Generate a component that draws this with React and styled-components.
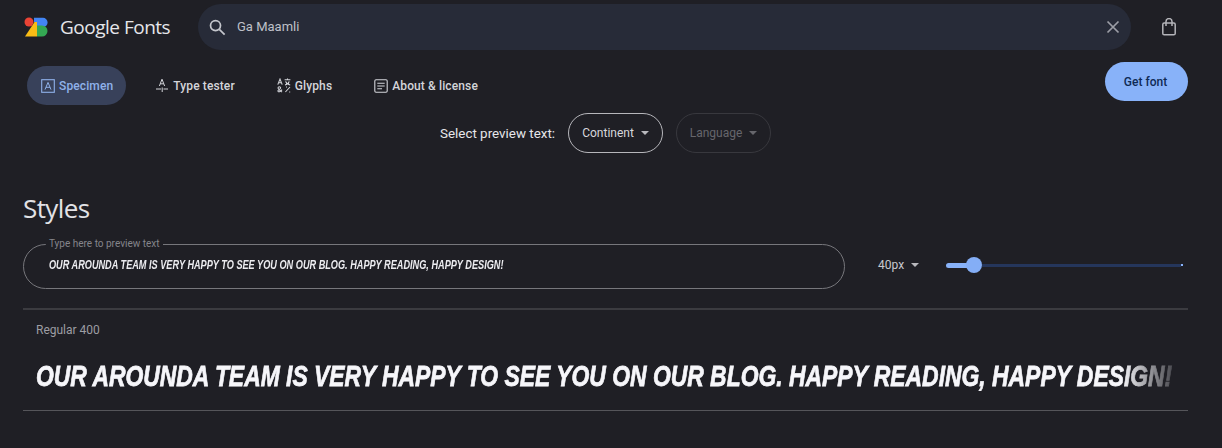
import React from "react";
import styled, { createGlobalStyle } from "styled-components";

const SAMPLE = "OUR AROUNDA TEAM IS VERY HAPPY TO SEE YOU ON OUR BLOG. HAPPY READING, HAPPY DESIGN!";

const Global = createGlobalStyle`
  html, body { margin: 0; padding: 0; background: #1f1f25; }
  body { font-family: "Roboto", "Liberation Sans", sans-serif; color: #e4e4e8; overflow: hidden; }
  * { box-sizing: border-box; }
`;

const Page = styled.div`
  width: 1222px;
  height: 448px;
  background: #1f1f25;
  display: flex;
  flex-direction: column;
`;

const Header = styled.header`
  display: flex;
  align-items: center;
  height: 54px;
  padding: 4px 0 4px 24px;
`;

const Brand = styled.div`
  display: flex;
  align-items: center;
  gap: 10px;
  width: 174px;
  margin-top: -1px;
`;

const BrandName = styled.span`
  font-family: "Open Sans", "Liberation Sans", sans-serif;
  font-size: 19px;
  letter-spacing: -0.5px;
  color: #e6e6ea;
  white-space: nowrap;
`;

const Search = styled.div`
  width: 933px;
  height: 46px;
  border-radius: 23px;
  background: #272b38;
  display: flex;
  align-items: center;
  padding: 0 6px 0 7px;
  color: #c4c6cc;
`;

const SearchText = styled.span`
  flex: 1;
  font-size: 13px;
  margin-left: 8px;
  margin-top: -1px;
  color: #bfc1c8;
`;

const IconSlot = styled.span`
  display: flex;
  align-items: center;
  justify-content: center;
  width: 24px;
  height: 24px;
  color: ${(p) => p.$color || "#c4c6cc"};
`;

const BagSlot = styled(IconSlot)`
  margin-left: 26px;
`;

const TabRow = styled.div`
  display: flex;
  align-items: flex-start;
  justify-content: space-between;
  height: 59px;
  padding: 8px 34px 0 27px;
`;

const Tabs = styled.nav`
  display: flex;
  gap: 15px;
  padding-top: 4px;
`;

const Tab = styled.div`
  display: flex;
  align-items: center;
  gap: 4px;
  height: 39px;
  padding: 0 13px 0 14px;
  border-radius: 20px;
  font-size: 12px;
  font-weight: 500;
  letter-spacing: 0.12px;
  white-space: nowrap;
  background: ${(p) => (p.$active ? "#38415a" : "transparent")};
  color: ${(p) => (p.$active ? "#8fb1ea" : "#d4d5da")};
`;

const GetFont = styled.button`
  width: 83px;
  height: 39px;
  margin-top: 0;
  padding: 0 2px 0 0;
  border: 0;
  border-radius: 20px;
  background: #88b2f9;
  color: #0f2a55;
  font: 500 12px "Roboto", sans-serif;
`;

const PreviewRow = styled.div`
  display: flex;
  align-items: center;
  height: 40px;
  padding-left: 440px;
  gap: 13px;
`;

const PreviewLabel = styled.span`
  font-size: 13.4px;
  color: #e6e6ea;
`;

const Chips = styled.div`
  display: flex;
  gap: 13px;
`;

const Chip = styled.div`
  display: flex;
  align-items: center;
  justify-content: center;
  gap: 7px;
  width: ${(p) => p.$width}px;
  height: 40px;
  border-radius: 20px;
  font-size: 12px;
  border: 1px solid ${(p) => (p.$disabled ? "#38383e" : "#b6b6bb")};
  color: ${(p) => (p.$disabled ? "#66666c" : "#d8d8dc")};
`;

const Caret = styled.span`
  width: 0;
  height: 0;
  border-left: 4.5px solid transparent;
  border-right: 4.5px solid transparent;
  border-top: 4.5px solid ${(p) => p.$color || "#b8b8bd"};
`;

const Section = styled.section`
  padding: 0 34px 0 23px;
`;

const Title = styled.h2`
  margin: 38px 0 0;
  height: 35px;
  font: 400 26px/35px "Open Sans", "Roboto", sans-serif;
  letter-spacing: -0.6px;
  color: #e2e2e6;
`;

const Controls = styled.div`
  display: flex;
  align-items: center;
  height: 72px;
  margin-top: 12px;
  border-bottom: 2px solid #3b3b40;
  padding-bottom: 16px;
`;

const Field = styled.fieldset`
  align-self: flex-start;
  flex: none;
  width: 822px;
  height: 51px;
  margin: 0;
  padding: 0 0 0 25px;
  border: 1px solid #77777c;
  border-radius: 23px;
  display: block;
`;

const FieldLegend = styled.legend`
  font-size: 10px;
  line-height: 12px;
  padding: 0 3px;
  margin-left: -3px;
  color: #85858b;
`;

const FieldText = styled.div`
  font-family: "Liberation Sans", sans-serif;
  font-weight: 700;
  font-style: italic;
  font-size: 9.17px;
  line-height: 14px;
  margin-top: 8px;
  color: #ececf0;
  white-space: nowrap;
  transform: scaleY(1.3);
`;

const SizeSelect = styled.div`
  display: flex;
  align-items: center;
  gap: 7px;
  margin-left: 33px;
  font-size: 12px;
  color: #c9c9ce;
`;

const Slider = styled.div`
  display: flex;
  align-items: center;
  width: 237px;
  margin-left: 27px;
  height: 16px;
`;

const SliderFill = styled.div`
  width: 21px;
  height: 5px;
  border-radius: 3px 0 0 3px;
  background: #88b2f9;
`;

const SliderKnob = styled.div`
  width: 16px;
  height: 16px;
  border-radius: 50%;
  background: #84aef6;
  margin-left: -1px;
`;

const SliderRest = styled.div`
  flex: 1;
  height: 3px;
  background: #25365c;
  margin-right: 3px;
`;

const SliderDot = styled.div`
  width: 2px;
  height: 2px;
  background: #88b2f9;
  margin-left: -3px;
`;

const StyleRow = styled.div`
  height: 101px;
  padding: 12px 0 0 13px;
  border-bottom: 1px solid #55555a;
`;

const StyleName = styled.div`
  font-size: 12px;
  line-height: 16px;
  color: #9d9da3;
`;

const BigSample = styled.div`
  margin-top: 20px;
  width: 1137px;
  font-family: "Liberation Sans", sans-serif;
  font-weight: 700;
  font-style: italic;
  font-size: 22.9px;
  line-height: 36px;
  white-space: nowrap;
  color: #f6f6fa;
  -webkit-text-stroke: 0.6px #f6f6fa;
  transform: scaleY(1.3);
  -webkit-mask-image: linear-gradient(to right, #000 95.5%, rgba(0,0,0,0.2) 100%);
  mask-image: linear-gradient(to right, #000 95.5%, rgba(0,0,0,0.2) 100%);
`;

const Logo = () => (
  <svg width="26" height="20" viewBox="0 0 26 20">
    <path d="M1 19.5 L10.5 5 L13 5 V19.5 Z" fill="#f9bc15" />
    <circle cx="5" cy="5" r="4.5" fill="#ea4335" />
    <path d="M10 0.8 H19 A4.6 4.6 0 0 1 19 10 H13 V5 H10 Z" fill="#4285f4" />
    <path d="M13 8.5 H18 A5.5 5.5 0 1 1 18 19.5 H13 Z" fill="#34a853" />
  </svg>
);

const SearchIcon = () => (
  <svg width="19" height="19" viewBox="0 0 24 24" fill="none" stroke="currentColor" strokeWidth="2.2">
    <circle cx="9.5" cy="9.5" r="6.3" />
    <path d="M14.3 14.3 L21 21" />
  </svg>
);

const CloseIcon = () => (
  <svg width="14" height="14" viewBox="0 0 14 14" fill="none" stroke="currentColor" strokeWidth="1.7">
    <path d="M1.5 1.5 L12.5 12.5 M12.5 1.5 L1.5 12.5" />
  </svg>
);

const BagIcon = () => (
  <svg width="16" height="18" viewBox="0 0 16 18" fill="none" stroke="currentColor" strokeWidth="1.5">
    <rect x="1.8" y="5" width="12.4" height="11.8" rx="1.4" />
    <path d="M5 8 V3.6 A3 3 0 0 1 11 3.6 V8" />
  </svg>
);

const SpecimenIcon = () => (
  <svg width="14" height="14" viewBox="0 0 14 14" fill="none" stroke="currentColor">
    <rect x="0.7" y="0.7" width="12.6" height="12.6" strokeWidth="1.1" />
    <path d="M4 10.6 L7 3.4 L10 10.6 M5 8.3 H9" strokeWidth="1" />
  </svg>
);

const TesterIcon = () => (
  <svg width="14" height="15" viewBox="0 0 14 15" fill="none" stroke="currentColor">
    <path d="M4.4 8 L7 1.2 L9.6 8 M5.4 5.8 H8.6" strokeWidth="1" />
    <path d="M1 11 H6 M8.5 11 H13 M7.2 9.5 V14" strokeWidth="1" />
  </svg>
);

const GlyphsIcon = () => (
  <svg width="14" height="15" viewBox="0 0 14 15" fill="none" stroke="currentColor" strokeWidth="1.05">
    <path d="M0.8 6.6 L3 1 L5.2 6.6 M1.6 4.8 H4.4" />
    <path d="M7.6 1.8 H13.4 M10.5 0.6 V1.8 M8.6 3.4 C9.4 5.6 11 6.6 13.2 7 M12.2 3.4 C11.6 5.4 10.2 6.5 8 7" />
    <path d="M5 14 C2.5 12 1 11.2 1 10 C1 8.4 3.8 8.4 3.6 10 C3.4 11.3 0.6 11.8 0.9 13 C1.2 14.4 3.5 14 5 11.6" />
    <path d="M8.4 14 L13 9 M9 9 h1 M12.2 14 h1" />
  </svg>
);

const AboutIcon = () => (
  <svg width="14" height="14" viewBox="0 0 14 14" fill="none" stroke="currentColor" strokeWidth="1.1">
    <rect x="0.8" y="0.8" width="12.4" height="12.4" rx="1.2" />
    <path d="M3.3 4.3 H10.7 M3.3 7 H10.7 M3.3 9.7 H8" />
  </svg>
);

export default function App() {
  return (
    <Page>
      <Global />
      <Header>
        <Brand>
          <Logo />
          <BrandName>Google Fonts</BrandName>
        </Brand>
        <Search>
          <IconSlot><SearchIcon /></IconSlot>
          <SearchText>Ga Maamli</SearchText>
          <IconSlot $color="#9c9ea6"><CloseIcon /></IconSlot>
        </Search>
        <BagSlot $color="#b4b4b9"><BagIcon /></BagSlot>
      </Header>
      <TabRow>
        <Tabs>
          <Tab $active><SpecimenIcon />Specimen</Tab>
          <Tab><TesterIcon />Type tester</Tab>
          <Tab><GlyphsIcon />Glyphs</Tab>
          <Tab><AboutIcon />About &amp; license</Tab>
        </Tabs>
        <GetFont>Get font</GetFont>
      </TabRow>
      <PreviewRow>
        <PreviewLabel>Select preview text:</PreviewLabel>
        <Chips>
          <Chip $width={95}>Continent<Caret /></Chip>
          <Chip $width={95} $disabled>Language<Caret $color="#66666c" /></Chip>
        </Chips>
      </PreviewRow>
      <Section>
        <Title>Styles</Title>
        <Controls>
          <Field>
            <FieldLegend>Type here to preview text</FieldLegend>
            <FieldText>{SAMPLE}</FieldText>
          </Field>
          <SizeSelect>40px<Caret /></SizeSelect>
          <Slider>
            <SliderFill />
            <SliderKnob />
            <SliderRest />
            <SliderDot />
          </Slider>
        </Controls>
        <StyleRow>
          <StyleName>Regular 400</StyleName>
          <BigSample>{SAMPLE}</BigSample>
        </StyleRow>
      </Section>
    </Page>
  );
}
